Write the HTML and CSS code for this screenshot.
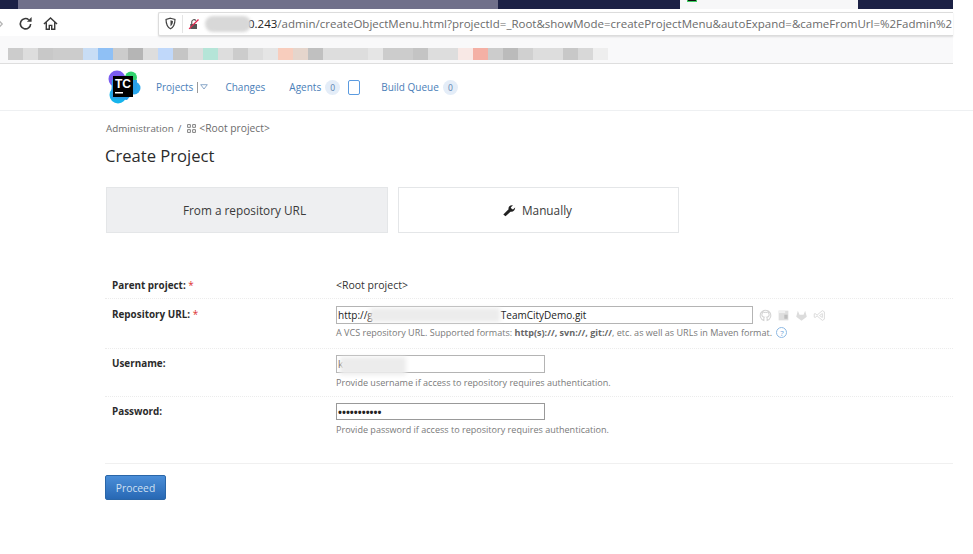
FILE: index.html
```html
<!DOCTYPE html>
<html lang="en">
<head>
<meta charset="utf-8">
<title>Create Project</title>
<link rel="stylesheet" href="styles.css">
</head>
<body>
<div class="sheet">
  <header class="browser">
    <div class="tabbar">
      <div class="tab-active"><span class="tab-favicon"></span></div>
    </div>
    <div class="toolbar">
      <svg class="tool-icon back" viewBox="0 0 16 16"><path d="M5 3l5 5-5 5" fill="none" stroke="#b5b5b5" stroke-width="2"/></svg>
      <svg class="tool-icon reload" viewBox="0 0 16 16"><path d="M13.500 8.500A5.500 5.500 0 1 1 11.500 4" fill="none" stroke="#3a3a3a" stroke-width="1.700"/><path d="M9.500 6h5V1z" fill="#3a3a3a"/></svg>
      <svg class="tool-icon home" viewBox="0 0 16 16"><path d="M1 8.500L8 2l7 6.500M3.500 7v7.200h3.200v-4.200h2.600v4.200h3.200V7" fill="none" stroke="#3a3a3a" stroke-width="1.500"/></svg>
      <div class="urlbar">
        <svg class="shield" viewBox="0 0 16 16"><path d="M8 1.500l5.500 1.500c0 5-1 9-5.500 11.500C3.500 12 2.500 8 2.500 3z" fill="none" stroke="#444" stroke-width="1.500"/><path d="M8 4l3 .8c0 3-.8 5-3 6.500z" fill="#444"/></svg>
        <span class="url-sep"></span>
        <svg class="lock" viewBox="0 0 16 16"><path d="M3 8h9v6.500H3z" fill="#555"/><path d="M5 8V5a3 3 0 0 1 5.500-1.500" fill="none" stroke="#555" stroke-width="1.500"/><path d="M1.500 14.500L14 2" stroke="#e22850" stroke-width="1.800"/></svg>
        <span class="url-blur"></span>
        <span class="url-text"><b>0.243</b>/admin/createObjectMenu.html?projectId=_Root&amp;showMode=createProjectMenu&amp;autoExpand=&amp;cameFromUrl=%2Fadmin%2</span>
      </div>
    </div>
    <div class="bookmarks"><div class="bookmark-blur"></div></div>
  </header>

  <nav class="nav">
    <svg class="logo" viewBox="0 0 34 34">
      <circle cx="10" cy="9" r="8.500" fill="#7a5cf0"/>
      <circle cx="24" cy="7.500" r="6" fill="#32d46e"/>
      <circle cx="27" cy="18" r="6.500" fill="#2aa8ee"/>
      <circle cx="11" cy="25" r="8.500" fill="#16b4ec"/>
      <path d="M5 10h25v8L20 30 4 28z" fill="#2a9fe8"/>
      <rect x="6" y="6" width="20" height="21" fill="#000"/>
      <text class="logo-text" x="8" y="18">TC</text>
      <rect x="8" y="22" width="8" height="1.500" fill="#fff"/>
    </svg>
    <a class="nav-link projects">Projects</a>
    <span class="nav-bar"></span>
    <svg class="caret" viewBox="0 0 8 6"><path d="M.7.700h6.600L4 5z" fill="none" stroke="#7f9fc4" stroke-width=".9"/></svg>
    <a class="nav-link changes">Changes</a>
    <a class="nav-link agents">Agents</a>
    <span class="count">0</span>
    <span class="agent-box"></span>
    <a class="nav-link queue">Build Queue</a>
    <span class="count">0</span>
  </nav>

  <main class="content">
    <div class="crumbs">
      <span>Administration</span><span class="slash">/</span>
      <svg class="grid-icon" viewBox="0 0 8 8"><path d="M.5.500h2.500v2.500H.5zM5 .500h2.500v2.500H5zM.5 5h2.500v2.500H.5zM5 5h2.500v2.500H5z" fill="none" stroke="#777" stroke-width=".8"/></svg>
      <span class="crumb-root">&lt;Root project&gt;</span>
    </div>
    <h1 class="title">Create Project</h1>
    <div class="tiles">
      <div class="tile tile-selected">From a repository URL</div>
      <div class="tile tile-manual">
        <svg class="wrench" viewBox="0 0 16 16"><path d="M1.500 13L7.500 7.200C7 5 8.500 2.500 11.500 2.500L12.500 2.700 10 5.200l1 1.500 1.500.6L15 5c.3 3-2 5.500-5.300 5L4 15z" fill="#222"/></svg>
        <span>Manually</span>
      </div>
    </div>

    <form class="form">
      <div class="row row-parent">
        <label class="label">Parent project: <i class="req">*</i></label>
        <div class="value">&lt;Root project&gt;</div>
      </div>
      <div class="row row-repo">
        <label class="label">Repository URL: <i class="req">*</i></label>
        <div class="value">
          <div class="input-line">
            <div class="input input-wide">http://g<span class="smudge smudge-url"></span>TeamCityDemo.git</div>
            <svg class="vcs" viewBox="0 0 16 16"><path d="M6 14.200A6.500 6.500 0 1 1 10 14.200v-2.600c0-.8-.2-1.200-.5-1.500 1.800-.2 3-1 3-3 0-.8-.3-1.400-.7-1.900.1-.5.100-1.100-.1-1.700-.7 0-1.400.3-1.900.7a6 6 0 0 0-3.600 0C5.700 3.800 5 3.500 4.300 3.500c-.2.600-.2 1.200-.1 1.700-.4.500-.7 1.100-.7 1.900 0 2 1.200 2.800 3 3-.3.300-.5.700-.5 1.500z" fill="none" stroke="#d4d4d4" stroke-width="1.300"/></svg>
            <svg class="vcs" viewBox="0 0 16 16"><path d="M2 2h12v12H2z" fill="#dedede"/><path d="M2 2h8v3H2z" fill="#f0f0f0"/><path d="M9 7h4v5H9z" fill="#bdbdbd"/></svg>
            <svg class="vcs" viewBox="0 0 16 16"><path d="M8 14.500L1.500 9.500 3.500 2l2 5h5l2-5 2 7.500z" fill="#dcdcdc"/></svg>
            <svg class="vcs" viewBox="0 0 16 16"><path d="M11.500 2L14 3.500v9L11.500 14 5 8.500 2.500 10.500 1.500 10V6l1-.5L5 7.500zM11.500 5.500L8 8l3.500 2.500z" fill="none" stroke="#d8d8d8" stroke-width="1.100"/></svg>
          </div>
          <p class="note note-repo">A VCS repository URL. Supported formats: <b>http(s)://, svn://, git://</b>, etc. as well as URLs in Maven format. <span class="help">?</span></p>
        </div>
      </div>
      <div class="row row-user">
        <label class="label">Username:</label>
        <div class="value">
          <div class="input input-short">k<span class="smudge smudge-user"></span></div>
          <p class="note">Provide username if access to repository requires authentication.</p>
        </div>
      </div>
      <div class="row row-pass">
        <label class="label">Password:</label>
        <div class="value">
          <div class="input input-short input-pass">•••••••••••</div>
          <p class="note">Provide password if access to repository requires authentication.</p>
        </div>
      </div>
      <div class="actions">
        <button class="proceed" type="button">Proceed</button>
      </div>
    </form>
  </main>
</div>
</body>
</html>
```

FILE: styles.css
```css
* { box-sizing: border-box; }
html, body { margin: 0; background: #fff; }
body { font-family: "Open Sans", "Noto Sans", sans-serif; font-size: 10.500px; color: #333; }
.sheet { width: 973px; height: 554px; overflow: hidden; }

.browser { width: 953px; }
.tabbar {
  position: relative;
  height: 9px;
  background: linear-gradient(90deg, #1c2145 0, #1c2145 18px, #70708a 18px, #70708a 498px, #1c2145 498px);
  overflow: hidden;
}
.tab-active { position: absolute; left: 680px; top: 0; width: 178px; height: 9px; background: #f7f7f8; }
.tab-favicon { position: absolute; left: 7px; top: -8px; width: 10px; height: 10px; background: #111; border: 1px solid #3ecf62; }

.toolbar { display: flex; align-items: center; height: 27px; background: #fff; padding-top: 2px; }
.tool-icon { width: 15px; height: 15px; flex: none; }
.back { margin-left: -4px; width: 10px; height: 10px; }
.reload { margin-left: 12px; }
.home { margin-left: 10px; }
.urlbar {
  display: flex; align-items: center; margin-left: 100px; flex: 1; min-width: 0; height: 24px;
  border: 1px solid #dcdcdc; border-right: none; border-radius: 2px 0 0 2px; background: #fff; font-size: 11.500px; color: #6b6b6b;
  white-space: nowrap; overflow: hidden;
  box-shadow: 0 1px 2px rgba(0,0,0,.12);
}
.shield { width: 13px; height: 13px; margin-left: 5px; flex: none; }
.url-sep { width: 1px; height: 18px; background: #e4e4e4; margin-left: 5px; flex: none; }
.lock { width: 12px; height: 12px; margin-left: 5px; flex: none; }
.url-blur { width: 46px; height: 16px; border-radius: 8px; background: #d8d8d8; filter: blur(1.500px); margin: 0 -3px 0 5px; flex: none; position: relative; z-index: 1; }
.url-text b { font-weight: 400; color: #222; }

.bookmarks { height: 28px; background: #f9f9fa; border-bottom: 1px solid #dedede; padding: 12px 0 0 8px; }
.bookmark-blur {
  width: 600px; height: 12px; filter: blur(.6px);
  background: linear-gradient(90deg,
    #cccccc 0 15px, #dddddd 15px 30px, #c8c8c8 30px 45px, #cccccc 45px 75px, #c8ddf5 75px 90px, #8fc0f5 90px 105px,
    #cccccc 105px 120px, #b5b5b5 120px 135px, #dddddd 135px 150px, #c0d8fa 150px 165px, #c5c5c5 165px 180px, #dddddd 180px 195px,
    #b5e5d8 195px 210px, #dddddd 210px 225px, #cccccc 225px 240px, #dddddd 240px 255px, #e5e5e5 255px 270px,
    #f8cdbd 270px 285px, #e5d5cc 285px 300px, #c0c0c0 300px 315px, #dddddd 315px 360px, #e5e5e5 360px 375px, #cccccc 375px 405px,
    #c4c4c4 405px 420px, #dddddd 420px 450px, #f8e8e5 450px 465px, #f4b0a5 465px 480px, #cccccc 480px 495px, #bbbbbb 495px 510px,
    #d0d0d0 510px 525px, #dddddd 525px 555px, #c8c8c8 555px 570px, #d8d8d8 570px 585px, #eeeeee 585px 600px);
}

.nav { display: flex; align-items: center; height: 47px; border-bottom: 1px solid #eef0f2; padding-left: 107px; }
.logo { width: 34px; height: 34px; flex: none; margin-right: 15px; }
.logo-text { font-family: "Liberation Sans", sans-serif; font-size: 12px; font-weight: 700; fill: #fff; }
.nav-link { color: #4a7eb8; font-size: 10px; }
.nav-bar { width: 1px; height: 11px; background: #9a9a9a; margin-left: 4px; }
.caret { width: 8px; height: 6px; margin-left: 2px; }
.changes { margin-left: 17px; }
.agents { margin-left: 24px; }
.count { width: 15px; height: 15px; border-radius: 8px; background: #e4edf8; color: #5a83b0; font-size: 8.500px; text-align: center; line-height: 15px; margin-left: 4px; }
.agent-box { width: 12px; height: 15px; border: 1.500px solid #5b9be0; border-radius: 2px; margin-left: 8px; }
.queue { margin-left: 21px; }

.content { padding-left: 105px; width: 953px; }
.crumbs { display: flex; align-items: center; height: 16px; margin-top: 9px; padding-left: 1px; color: #6c6c6c; font-size: 9.800px; }
.slash { margin: 0 6px 0 4px; }
.grid-icon { width: 9px; height: 9px; margin-right: 3px; }
.crumb-root { font-size: 10.300px; }
.title { font-size: 16.600px; font-weight: 400; margin: 8px 0 0; color: #2b2b2b; line-height: 24px; height: 24px; }
.tiles { display: flex; gap: 10px; margin: 19px 0 0 1px; }
.tile {
  display: flex; align-items: center; justify-content: center; width: 282px; height: 46px;
  border: 1px solid #e4e6e8; font-size: 11.800px; color: #3a3a3a;
}
.tile-manual { width: 281px; padding-right: 3px; }
.tile-selected { background: #eeeff1; padding-right: 5px; }
.wrench { width: 14px; height: 14px; margin-right: 6px; }

.form { margin-top: 40px; }
.row { display: flex; border-bottom: 1px dotted #ececec; padding-left: 7px; }
.label { width: 224px; font-weight: 700; font-size: 9.900px; color: #2b2b2b; flex: none; line-height: 14px; }
.req { color: #d33; font-style: normal; font-weight: 400; }
.value { flex: 1; min-width: 0; margin-top: -1px; }
.row-parent { height: 26px; padding-top: 5px; }
.row-parent .value { line-height: 14px; margin-top: 0; }
.row-repo { height: 50px; padding-top: 8px; }
.row-user { height: 48px; padding-top: 7px; }
.row-pass { height: 67px; padding-top: 7px; border-bottom-style: solid; border-bottom-color: #f0f0f0; }
.input-line { display: flex; align-items: center; }
.input {
  height: 18px; border: 1px solid #b4b4b4; padding: 0 1px; line-height: 16px; font-size: 10px; color: #222;
  white-space: nowrap; position: relative;
}
.input-wide { width: 417px; display: flex; }
.input-short { width: 209px; display: flex; }
.input-pass { font-size: 10.500px; font-weight: 700; border-color: #999; height: 17px; }
.smudge { display: block; background: #ececec; filter: blur(2px); }
.smudge-url { width: 130px; height: 14px; margin: 1px 1px 0 -3px; }
.smudge-user { width: 66px; height: 18px; margin: 1px 0 0 -3px; }
.vcs { width: 13px; height: 13px; margin-left: 5px; flex: none; }
.vcs:first-of-type { margin-left: 6px; }
.note { margin: 3px 0 0; color: #7a7a7a; font-size: 9.050px; line-height: 13px; white-space: nowrap; }
.note-repo { margin-top: 2px; }
.note b { color: #666; }
.help { display: inline-block; width: 11px; height: 11px; border: 1px solid #8db9e4; border-radius: 50%; color: #6aa0d8; font-size: 8px; line-height: 9px; text-align: center; margin-left: 2px; }
.actions { padding-top: 11px; }
.proceed {
  width: 61px; height: 25px; border: 1px solid #2a66a8; border-radius: 2px;
  background: linear-gradient(#4a8ed8, #2868b4); color: #cfe0f2; font-family: inherit; font-size: 10.300px; padding: 0;
}
```
